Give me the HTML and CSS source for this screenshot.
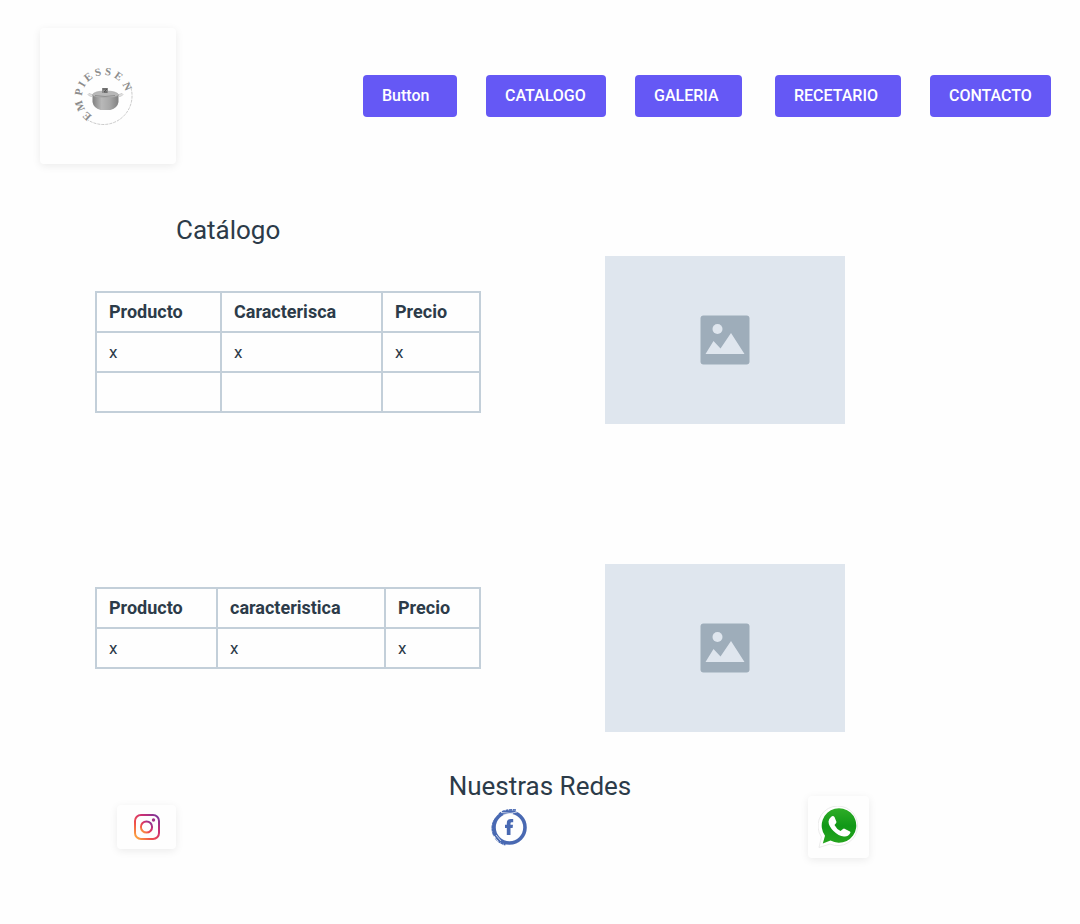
FILE: index.html
```html
<!DOCTYPE html>
<html lang="es">
<head>
<meta charset="utf-8">
<meta name="viewport" content="width=device-width, initial-scale=1">
<title>Catálogo</title>
<link rel="stylesheet" href="styles.css">
</head>
<body>
<header class="header">
  <a class="logo card" href="#" aria-label="Empiessen">
    <svg class="logo-mark" viewBox="0 0 64 64">
      <defs>
        <linearGradient id="pot" x1="0" x2="1" y1="0" y2="0"><stop offset="0" stop-color="#808080"/><stop offset=".35" stop-color="#b8b8b8"/><stop offset=".65" stop-color="#a8a8a8"/><stop offset="1" stop-color="#808080"/></linearGradient>
      </defs>
      <text class="logo-text" x="20 13.1 9.8 11.9 15.6 23.8 32.4 41.6 50.2" y="50.9 44.4 31.1 22.8 16.9 11.4 9.8 11.9 19.2" rotate="-138 -110 -79 -60 -38 -14 9 35 65">EMPIESSEN</text>
      <path d="M57.500 19A28.700 28.700 0 0 1 15.900 55" fill="none" stroke="#c4c4c4" stroke-width=".9" stroke-dasharray="3 1"/>
      <path d="M20 29.500q-4-2-4 0 1 2 4 2M47 29.500q4-2 4 0-1 2-4 2" fill="#e4e4e4" stroke="#c4c4c4" stroke-width=".8"/>
      <path d="M20.500 30h26v7q-1 6-8 8h-10q-7-2-8-8z" fill="url(#pot)"/>
      <path d="M20 30q2-4 13.500-4T47 30q-3 2.500-13.500 2.500T20 30z" fill="#b8b8b8" stroke="#a2a2a2" stroke-width=".6"/>
      <path d="M23 30.500q10 2 20 0" fill="none" stroke="#909090" stroke-width="1"/>
      <path d="M30 23h6v5h-6z" fill="#8c8c8c"/><path d="M31 24h4l-3 3h3" fill="none" stroke="#565656"/>
    </svg>
  </a>
  <nav class="nav">
    <button class="button" type="button">Button</button>
    <button class="button" type="button">CATALOGO</button>
    <button class="button" type="button">GALERIA</button>
    <button class="button spaced" type="button">RECETARIO</button>
    <button class="button" type="button">CONTACTO</button>
  </nav>
</header>
<main>
  <section class="product">
    <div>
      <h1 class="title catalog-title">Catálogo</h1>
      <table class="table">
        <colgroup><col class="c-first"><col class="c-middle"><col class="c-last"></colgroup>
        <thead><tr><th scope="col">Producto</th><th scope="col">Caracterisca</th><th scope="col">Precio</th></tr></thead>
        <tbody><tr><td>x</td><td>x</td><td>x</td></tr><tr><td></td><td></td><td></td></tr></tbody>
      </table>
    </div>
    <div class="picture first-picture" role="img" aria-label="Imagen del producto">
      <svg class="picture-icon" viewBox="0 0 50 50"><rect x=".5" y=".5" width="49" height="49" rx="3" fill="#9eadba"/><circle cx="17.500" cy="14" r="5" fill="#dfe6ee"/><path d="M5.500 39 13.500 26l7 7.500L31 18l13.500 21z" fill="#dfe6ee"/></svg>
    </div>
  </section>
  <section class="product second">
    <table class="table second-table">
      <colgroup><col class="s-first"><col class="s-middle"><col class="s-last"></colgroup>
      <thead><tr><th scope="col">Producto</th><th scope="col">caracteristica</th><th scope="col">Precio</th></tr></thead>
      <tbody><tr><td>x</td><td>x</td><td>x</td></tr></tbody>
    </table>
    <div class="picture" role="img" aria-label="Imagen del producto">
      <svg class="picture-icon" viewBox="0 0 50 50"><rect x=".5" y=".5" width="49" height="49" rx="3" fill="#9eadba"/><circle cx="17.500" cy="14" r="5" fill="#dfe6ee"/><path d="M5.500 39 13.500 26l7 7.500L31 18l13.500 21z" fill="#dfe6ee"/></svg>
    </div>
  </section>
</main>
<footer class="footer">
  <h2 class="title networks-title">Nuestras Redes</h2>
  <div class="networks">
    <a class="card instagram" href="#" aria-label="Instagram">
      <svg class="instagram-icon" viewBox="0 0 26 26">
        <defs><linearGradient id="ig" x1="0" y1="1" x2="1" y2="0"><stop offset="0" stop-color="#ffb13b"/><stop offset=".35" stop-color="#ee4c4c"/><stop offset=".65" stop-color="#cc2f72"/><stop offset="1" stop-color="#71379f"/></linearGradient></defs>
        <g fill="none" stroke="url(#ig)" stroke-width="2"><rect x="1" y="1" width="24" height="24" rx="6"/><circle cx="12.500" cy="13" r="5.600"/></g><circle cx="19.500" cy="6" r="1.700" fill="#a53289"/>
      </svg>
    </a>
    <a class="facebook" href="#" aria-label="Facebook">
      <svg class="facebook-icon" viewBox="0 0 37 37">
        <circle cx="18.500" cy="18.500" r="15.500" fill="none" stroke="#4969b2" stroke-width="3.600"/>
        <path d="M4.500 10Q-1 18 3.500 27M4.500 29q4 5 10 6.500" fill="none" stroke="#4969b2" stroke-width="2" stroke-dasharray="3 .4"/>
        <path d="M8 5Q14 0 25 1" fill="none" stroke="#4969b2" stroke-width="1.600" stroke-dasharray="3 .7"/>
        <path d="M10 3.500l12 1M12 6l14-3M2.500 27l5 6M5 26l5 6" fill="none" stroke="#fefefe" stroke-width=".7"/>
        <path d="M15.800 26v-7H14v-3.200h1.800v-1.600q0-4.200 4.200-4.200h2.200v3.200h-1.400q-1.300 0-1.300 1.300v1.300H22l-.4 3.200h-2.100v7z" fill="#4969b2"/>
      </svg>
    </a>
    <a class="card whatsapp" href="#" aria-label="WhatsApp">
      <svg class="whatsapp-icon" viewBox="0 0 42 42">
        <defs><linearGradient id="wa" x1="0" y1="0" x2="0" y2="1"><stop offset="0" stop-color="#2fad28"/><stop offset=".5" stop-color="#119817"/><stop offset="1" stop-color="#25a51d"/></linearGradient></defs>
        <path d="M1 41.500 3.500 31A19.800 19.800 0 1 1 12 38z" fill="#fff" stroke="#e2e2e2" stroke-width=".7"/>
        <path d="M4.800 37.500 7 29.700A17.300 17.300 0 1 1 12.500 34.600z" fill="url(#wa)"/>
        <path d="M13 11q2-2 3.500 0l2 5q0 1-2 3 2 4 6 6l2.500-2q1-1 2 0l5 2.500q1 .5 0 2-2 3.500-6 3-5.500-.5-10.500-5.500-5-5-5-9.500.3-3 2.500-4.500z" fill="#fff"/>
      </svg>
    </a>
  </div>
</footer>
</body>
</html>
```
FILE: styles.css
```css
* { box-sizing: border-box; }

body {
  margin: 0;
  background: #fefefe;
  color: #2c3b49;
  font-family: Roboto, "Liberation Sans", sans-serif;
  font-size: 17px;
  line-height: 24px;
}

.card {
  display: flex;
  border-radius: 4px;
  background: #fefefe;
  box-shadow: 0 2px 8px rgba(0, 0, 0, 0.08);
}

.header {
  display: flex;
  align-items: center;
  justify-content: space-between;
  padding: 28px 29px 0 40px;
}

.logo { padding: 37px 40px 35px 32px; }
.logo-mark { width: 64px; height: 64px; }
.logo-text {
  fill: #8c8c8c;
  font-family: "Liberation Serif", serif;
  font-size: 11px;
  font-weight: 700;
}

.nav {
  display: grid;
  grid-template-columns: 94px 120px 107px 130px 121px;
  gap: 29px;
}
.button {
  padding: 9px 19px;
  border: 0;
  border-radius: 4px;
  background: #6558f5;
  color: #fff;
  font: 500 16px/24px Roboto, "Liberation Sans", sans-serif;
  text-align: left;
}
.spaced { margin-left: 4px; }

.title {
  margin: 0;
  font-size: 26px;
  font-weight: 400;
  line-height: 32px;
}

.product {
  display: grid;
  grid-template-columns: 386fr 240fr;
  gap: 124px;
  align-items: start;
  padding: 50px 235px 0 95px;
}
.second { padding-top: 140px; }
.catalog-title { padding: 0 0 45px 81px; }

.table {
  width: 100%;
  border-collapse: collapse;
  table-layout: fixed;
}
.table th,
.table td {
  height: 40px;
  padding: 7px 12px;
  border: 2px solid #c3cfd9;
  text-align: left;
}
.table th {
  font-size: 18px;
  font-weight: 700;
}
.second-table { margin-top: 23px; }
.c-first { width: 125px; }
.c-middle { width: 161px; }
.s-first { width: 121px; }
.s-middle { width: 168px; }

.picture {
  display: flex;
  align-items: center;
  justify-content: center;
  aspect-ratio: 10 / 7;
  background: #dfe6ee;
}
.first-picture { margin-top: 42px; }
.picture-icon { width: 50px; height: 50px; }

.footer { padding: 38px 0; }
.networks-title { text-align: center; }
.networks {
  display: grid;
  grid-template-columns: 374fr 317fr 61px;
  align-items: center;
  justify-items: start;
  padding: 0 211px 0 117px;
  margin-top: -6px;
}
.instagram { padding: 9px 16px 9px 17px; }
.instagram-icon { width: 26px; height: 26px; }
.facebook { display: flex; }
.facebook-icon { width: 37px; height: 37px; }
.whatsapp { padding: 10px 9px 10px 10px; }
.whatsapp-icon { width: 42px; height: 42px; }
```
